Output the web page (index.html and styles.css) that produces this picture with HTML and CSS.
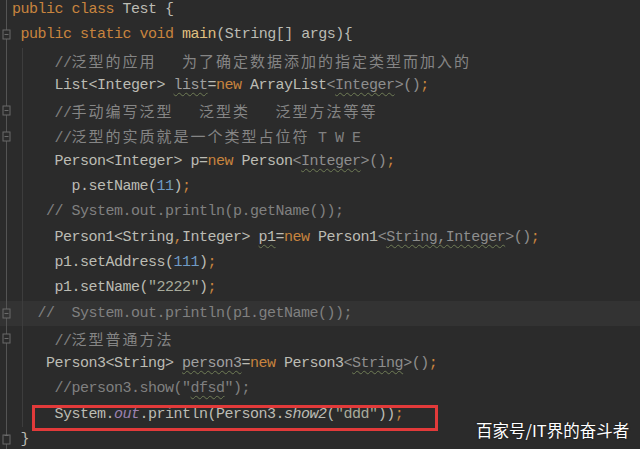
FILE: index.html
```html
<!DOCTYPE html>
<html>
<head>
<meta charset="utf-8">
<link rel="stylesheet" href="styles.css">
</head>
<body>
<div class="editor">
  <div class="line"><span class="gut"></span><span class="code"><span class="k">public</span> <span class="k">class</span> Test {</span></div>
  <div class="line"><span class="gut"><svg class="fold" viewBox="0 0 9 11"><rect x="1" y="1" width="7" height="9" fill="#2b2b2b" stroke="#6a6a6a"/><path d="M2.5 5.5h4" stroke="#6a6a6a"/></svg></span><span class="code"> <span class="k">public</span> <span class="k">static</span> <span class="k">void</span> <span class="fn">main</span>(String[] args){</span></div>
  <div class="line guide"><span class="gut"></span><span class="code">     <span class="c">//<span class="cj">泛型的应用</span>   <span class="cj">为了确定数据添加的指定类型而加入的</span></span></span></div>
  <div class="line guide"><span class="gut"></span><span class="code">     List&lt;Integer&gt; <span class="wv dim">list</span>=<span class="k">new</span> ArrayList<span class="g">&lt;<span class="wv">Integer</span>&gt;</span><span class="g">()</span><span class="k">;</span></span></div>
  <div class="line guide"><span class="gut"><svg class="fold" viewBox="0 0 9 11"><rect x="1" y="1" width="7" height="9" fill="#2b2b2b" stroke="#6a6a6a"/><path d="M2.5 5.5h4" stroke="#6a6a6a"/></svg></span><span class="code">     <span class="c">//<span class="cj">手动编写泛型</span>   <span class="cj">泛型类</span>   <span class="cj">泛型方法等等</span></span></span></div>
  <div class="line guide"><span class="gut"><svg class="fold" viewBox="0 0 9 11"><rect x="1" y="1" width="7" height="9" fill="#2b2b2b" stroke="#6a6a6a"/><path d="M2.5 5.5h4" stroke="#6a6a6a"/></svg></span><span class="code">     <span class="c">//<span class="cj">泛型的实质就是一个类型占位符</span> T W E</span></span></div>
  <div class="line guide"><span class="gut"></span><span class="code">     Person&lt;Integer&gt; p=<span class="k">new</span> Person<span class="g">&lt;<span class="wv">Integer</span>&gt;</span><span class="g">()</span><span class="k">;</span></span></div>
  <div class="line guide"><span class="gut"></span><span class="code">       p.setName(<span class="n">11</span>)<span class="k">;</span></span></div>
  <div class="line guide"><span class="gut"></span><span class="code">    <span class="c">// System.out.println(p.getName());</span></span></div>
  <div class="line guide"><span class="gut"></span><span class="code">     Person1&lt;String<span class="k">,</span>Integer&gt; <span class="wv">p1</span>=<span class="k">new</span> Person1<span class="g">&lt;<span class="wv">String,Integer</span>&gt;</span><span class="g">()</span><span class="k">;</span></span></div>
  <div class="line guide"><span class="gut"></span><span class="code">     p1.setAddress(<span class="n">111</span>)<span class="k">;</span></span></div>
  <div class="line guide"><span class="gut"></span><span class="code">     p1.setName(<span class="s">"2222"</span>)<span class="k">;</span></span></div>
  <div class="line guide current"><span class="gut"><svg class="fold" viewBox="0 0 9 11"><rect x="1" y="1" width="7" height="9" fill="#333" stroke="#6a6a6a"/><path d="M2.5 5.5h4" stroke="#6a6a6a"/></svg></span><span class="code">   <span class="c">//  System.out.println(p1.getName());</span></span></div>
  <div class="line guide"><span class="gut"><svg class="fold" viewBox="0 0 9 11"><rect x="1" y="1" width="7" height="9" fill="#2b2b2b" stroke="#6a6a6a"/><path d="M2.5 5.5h4" stroke="#6a6a6a"/></svg></span><span class="code">     <span class="c">//<span class="cj">泛型普通方法</span></span></span></div>
  <div class="line guide"><span class="gut"></span><span class="code">    Person3&lt;String&gt; <span class="wv dim">person3</span>=<span class="k">new</span> Person3<span class="g">&lt;<span class="wv">String</span>&gt;</span><span class="g">()</span><span class="k">;</span></span></div>
  <div class="line guide"><span class="gut"></span><span class="code">     <span class="c">//person3.show("<span class="wv">dfsd</span>");</span></span></div>
  <div class="line guide"><span class="gut"></span><span class="code">     System.<span class="st">out</span>.println(Person3.<span class="it">show2</span>(<span class="s">"ddd"</span>))<span class="k">;</span></span></div>
  <div class="line"><span class="gut"><svg class="fold" viewBox="0 0 9 11"><rect x="1" y="1" width="7" height="9" fill="#2b2b2b" stroke="#6a6a6a"/><path d="M2.5 1.5h4" stroke="#6a6a6a"/></svg></span><span class="code"> }</span></div>
</div>
<div class="mark"></div>
<div class="watermark">百家号/IT界的奋斗者</div>
</body>
</html>
```

FILE: styles.css
```css
html, body {
  margin: 0;
  padding: 0;
  background: #2b2b2b;
  width: 640px;
  height: 449px;
  overflow: hidden;
}
.editor {
  margin-top: -3px;
  font-family: "Liberation Mono", monospace;
  font-size: 15px;
  letter-spacing: -0.5px;
  color: #bcbcb4;
}
.line {
  display: flex;
  height: 25.3px;
  line-height: 25.3px;
  white-space: pre;
}
.gut {
  flex: 0 0 12px;
  position: relative;
  display: flex;
  align-items: center;
  justify-content: center;
  background: linear-gradient(to right, transparent 6px, #545454 6px, #545454 7px, transparent 7px);
}
.fold {
  width: 9px;
  height: 11px;
  margin-left: 1px;
}
.code {
  flex: 1;
}
.guide .code {
  background: linear-gradient(to right, transparent 10px, #3d3d3d 10px, #3d3d3d 11px, transparent 11px);
}
.current {
  background: #333333;
}
.k { color: #c8843e; }
.fn { color: #e0c080; }
.c { color: #808080; }
.cj {
  font-family: "Noto Sans CJK SC", sans-serif;
  font-size: 15px;
  letter-spacing: 2px;
  color: #858585;
}
.g { color: #8e8e8e; }
.n { color: #6f9ac4; }
.s { color: #a8ab9c; }
.st { color: #9b82b0; font-style: italic; }
.it { font-style: italic; }
.dim { color: #a0a0a0; }
.wv {
  text-decoration: underline wavy #6f7c55;
  text-decoration-thickness: 1px;
  text-underline-offset: 3px;
}
.mark {
  position: absolute;
  left: 32px;
  top: 405px;
  width: 400px;
  height: 20px;
  border: 3px solid #e23a3a;
}
.watermark {
  position: absolute;
  left: 476px;
  top: 419px;
  font-family: "Noto Sans CJK SC", sans-serif;
  font-size: 16.5px;
  line-height: 22px;
  color: #ffffff;
  text-shadow: 0 0 2px rgba(0,0,0,0.6);
}
```
